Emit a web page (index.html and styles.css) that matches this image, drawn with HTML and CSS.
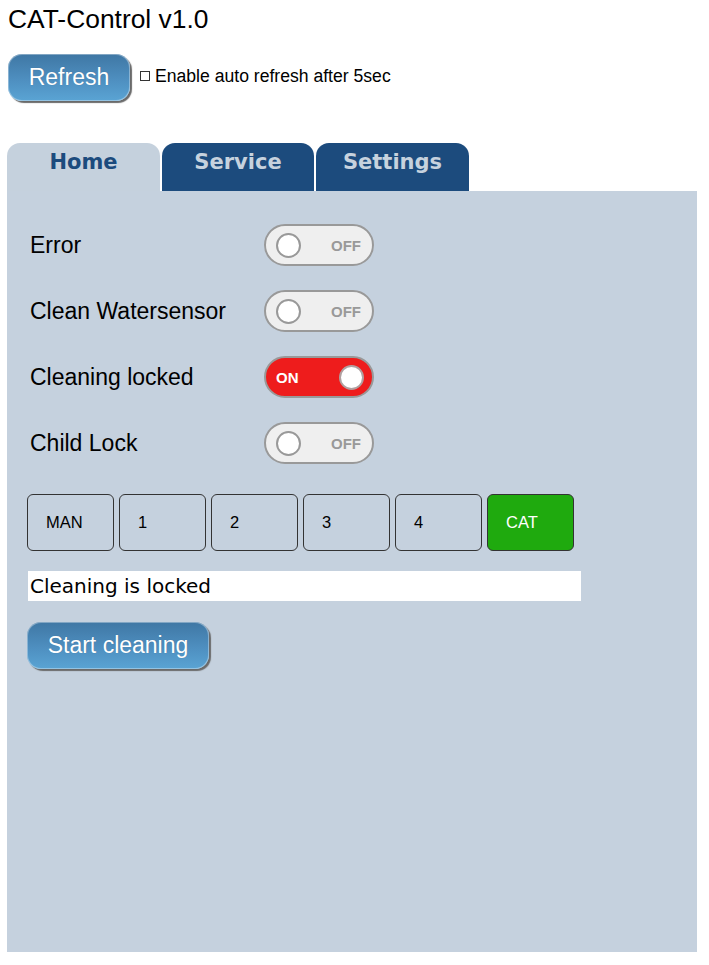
FILE: index.html
```html
<!DOCTYPE html>
<html>
<head>
<meta charset="utf-8">
<link rel="stylesheet" href="styles.css">
</head>
<body>
<h1 class="title">CAT-Control v1.0</h1>
<div class="toolbar">
  <button class="btn btn-refresh">Refresh</button>
  <label class="auto"><input type="checkbox" class="auto-check"> Enable auto refresh after 5sec</label>
</div>
<div class="tabs">
  <div class="tab tab-active">Home</div>
  <div class="tab tab-mid">Service</div>
  <div class="tab">Settings</div>
</div>
<div class="panel">
  <div class="row">
    <span class="row-label">Error</span>
    <span class="toggle"><span class="knob"></span><span class="toggle-text">OFF</span></span>
  </div>
  <div class="row">
    <span class="row-label">Clean Watersensor</span>
    <span class="toggle"><span class="knob"></span><span class="toggle-text">OFF</span></span>
  </div>
  <div class="row">
    <span class="row-label">Cleaning locked</span>
    <span class="toggle toggle-on"><span class="toggle-text">ON</span><span class="knob"></span></span>
  </div>
  <div class="row">
    <span class="row-label">Child Lock</span>
    <span class="toggle"><span class="knob"></span><span class="toggle-text">OFF</span></span>
  </div>
  <div class="modes">
    <div class="mode">MAN</div>
    <div class="mode">1</div>
    <div class="mode">2</div>
    <div class="mode">3</div>
    <div class="mode">4</div>
    <div class="mode mode-active">CAT</div>
  </div>
  <div class="status">Cleaning is locked</div>
  <button class="btn btn-start">Start cleaning</button>
</div>
</body>
</html>
```
FILE: styles.css
```css
html, body {
  margin: 0;
  padding: 0;
  background: #ffffff;
}
body {
  padding: 0 12px 13px 7px;
  font-family: "Liberation Sans", Arial, sans-serif;
  color: #000;
}
.title {
  margin: 0;
  padding: 4px 0 0 1px;
  font-size: 26.4px;
  font-weight: normal;
  line-height: 30px;
}
.toolbar {
  display: flex;
  align-items: center;
  margin-top: 19px;
  padding-left: 1px;
  height: 49px;
}
.btn {
  border: none;
  color: #fff;
  font-family: "Liberation Sans", Arial, sans-serif;
  font-size: 23px;
  background: linear-gradient(to bottom, #3f77a4 0%, #4e8fc0 55%, #5aa4d4 100%);
  border-radius: 14px;
  box-shadow: 2px 2px 1px #6a6a6a, inset 0 0 0 1px rgba(255,255,255,0.35);
  text-shadow: 0 0 1px rgba(0,0,0,0.2);
  padding: 0;
  cursor: pointer;
}
.btn-refresh {
  width: 122px;
  height: 47px;
}
.auto {
  display: flex;
  align-items: center;
  margin-left: 10px;
  font-size: 17.6px;
  margin-top: -3px;
}
.auto-check {
  appearance: none;
  -webkit-appearance: none;
  width: 10px;
  height: 10px;
  margin: 0 5px 0 0;
  border: 1px solid #333;
  background: #fff;
}
.tabs {
  display: flex;
  margin-top: 41px;
  height: 48px;
  gap: 2px;
}
.tab {
  width: 153px;
  height: 48px;
  box-sizing: border-box;
  border-radius: 13px 13px 0 0;
  background: #1c4b7d;
  color: #c6d2de;
  font-family: "DejaVu Sans", Verdana, sans-serif;
  font-weight: bold;
  font-size: 21px;
  text-align: center;
  padding-top: 7px;
}
.tab-active {
  background: #c5d1dd;
  color: #1c4b7d;
}
.tab-mid {
  width: 152px;
}
.panel {
  background: #c5d1de;
  height: 761px;
  box-sizing: border-box;
  padding: 32px 20px 0 20px;
}
.row {
  display: flex;
  align-items: center;
  height: 44px;
  margin-bottom: 22px;
  padding-left: 3px;
}
.row-label {
  width: 234px;
  font-size: 23px;
}
.toggle {
  width: 110px;
  height: 42px;
  box-sizing: border-box;
  border: 2px solid #999;
  border-radius: 21px;
  background: #efefef;
  display: flex;
  align-items: center;
  justify-content: space-between;
  padding: 0 10px 0 10px;
}
.knob {
  width: 21px;
  height: 21px;
  border: 2px solid #999;
  border-radius: 50%;
  background: #fff;
}
.toggle-text {
  font-family: "Liberation Sans", Arial, sans-serif;
  font-weight: bold;
  font-size: 15px;
  color: #999;
  padding-right: 1px;
}
.toggle-on {
  background: #ee1c1c;
  padding-left: 10px;
  padding-right: 8px;
}
.toggle-on .toggle-text {
  color: #fff;
}
.toggle-on .knob {
  border-color: #b0a0a0;
}
.modes {
  display: flex;
  gap: 5px;
  margin-top: 29px;
}
.mode {
  width: 87px;
  height: 57px;
  box-sizing: border-box;
  border: 1px solid #333;
  border-radius: 6px;
  font-size: 16.5px;
  display: flex;
  align-items: center;
  padding-left: 18px;
}
.mode-active {
  background: #1faa0e;
  color: #fff;
}
.status {
  margin-top: 20px;
  margin-left: 1px;
  width: 553px;
  height: 30px;
  background: #fff;
  box-sizing: border-box;
  padding-left: 2px;
  font-family: "DejaVu Sans", Tahoma, sans-serif;
  font-size: 20px;
  line-height: 30px;
}
.btn-start {
  margin-top: 21px;
  width: 182px;
  height: 47px;
  display: block;
}
```
